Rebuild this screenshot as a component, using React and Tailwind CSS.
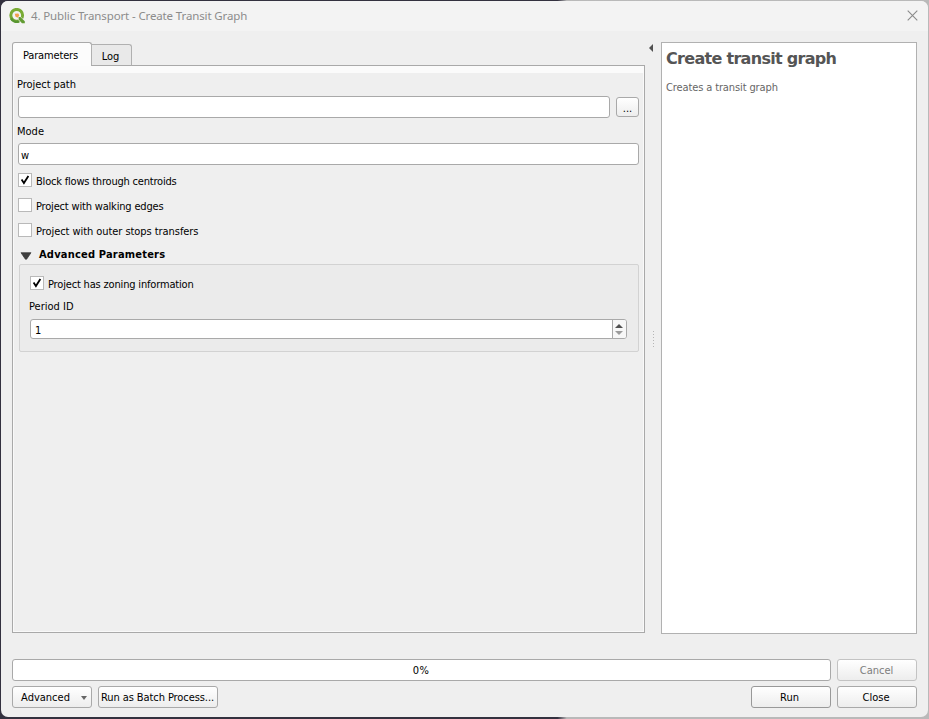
import React from "react";

const BUTTON =
  "flex h-[22px] items-center justify-center rounded-[3px] border bg-linear-to-b from-white to-[#ededed] pt-px whitespace-pre";

function Check({ checked, label, tracking }) {
  return (
    <label className="flex h-[15px] items-start">
      <span className="-mt-px flex size-[14px] shrink-0 items-center justify-center border border-[#b9b9b9] bg-white">
        {checked && (
          <svg width="10" height="10" viewBox="0 0 10 10" fill="none">
            <path d="M1.6 4.6 L3.9 8 L8.4 1" stroke="#000" strokeWidth="1.8" />
          </svg>
        )}
      </span>
      <span className={"ml-1 whitespace-nowrap pt-px " + tracking}>{label}</span>
    </label>
  );
}

function Logo() {
  return (
    <svg width="16" height="16" viewBox="0 0 16 16">
      <circle cx="7.7" cy="7.3" r="5.9" fill="none" stroke="#79ab35" strokeWidth="3" />
      <path d="M2 10.4 A6.4 6.4 0 0 0 10 13.4" fill="none" stroke="#589632" strokeWidth="2.4" />
      <path d="M9.4 9.2 L11 8 L16 12.9 V16 H12.6 L9 11.4Z" fill="#f3f3f3" />
      <path d="M9.6 9 L11.4 9 L15.8 13.2 V15.3 H13 L9.6 11.6Z" fill="#629c33" />
      <path d="M5.8 5.8 L9.3 5.4 L10.3 7.6 L8.6 9.8 L6.4 8.6Z" fill="#f2a04c" />
    </svg>
  );
}

export default function App() {
  return (
    <div className="h-[719px] w-[929px] overflow-hidden bg-[#45434f] bg-linear-to-r from-[#33313f] from-60% to-[#b9b9b9] to-61% pt-px pr-px pb-[2px] pl-px font-['DejaVu_Sans_Condensed','DejaVu_Sans',sans-serif] text-[11px] leading-[14px] text-black">
      <div className="flex h-[716px] flex-col overflow-hidden rounded-[7px] bg-[#efefef]">
        <header className="flex h-[30px] shrink-0 items-center bg-[#f3f3f3] pl-2">
          <Logo />
          <span className="ml-[6px] whitespace-nowrap font-['Noto_Sans',sans-serif] text-[11.5px] tracking-[-0.13px] text-[#8c8c8c]">
            4. Public Transport - Create Transit Graph
          </span>
          <svg className="mr-[10px] mb-[2px] ml-auto" width="11" height="11" viewBox="0 0 11 11">
            <path d="M0.7 0.7 L10.3 10.3 M10.3 0.7 L0.7 10.3" stroke="#8a8a8a" strokeWidth="1.1" />
          </svg>
        </header>

        <main className="flex h-[603px] shrink-0 pt-[11px] pr-[11px] pl-[11px]">
          <section className="flex h-[592px] w-[633px] shrink-0 flex-col">
            <nav className="relative z-10 -mb-px flex h-[24px] items-end">
              <div className="flex h-[24px] w-[80px] items-center justify-center rounded-t-[3px] border border-b-0 border-[#a9a9a9] bg-[#fcfcfc] pt-[2px] pr-[3px] tracking-[-0.15px]">
                Parameters
              </div>
              <div className="-ml-px flex h-[22px] w-[41px] items-center justify-center rounded-tr-[3px] border border-[#b0b0b0] border-b-[#a9a9a9] bg-[#e9e9e9] pt-[4px] pr-[2px]">
                Log
              </div>
            </nav>
            <div className="flex h-[568px] flex-col border border-[#a9a9a9] bg-[#efefef]">
              <div className="h-[7px] shrink-0 bg-[#fbfbfb]" />
              <div className="flex grow flex-col border-x border-b border-[#f9f9f9] px-[4px]">
                <div className="mt-[5px] -ml-px h-[14px] tracking-[-0.05px]">Project path</div>
                <div className="mt-[4px] flex h-[22px] gap-[6px]">
                  <div className="h-[22px] w-[592px] rounded-[3px] border border-[#a9a9a9] bg-white" />
                  <div className="mt-px flex h-[20px] w-[23px] items-end justify-center rounded-[3px] border border-[#a9a9a9] bg-linear-to-b from-white to-[#ededed]">
                    ...
                  </div>
                </div>
                <div className="mt-[7px] -ml-px h-[14px]">Mode</div>
                <div className="mt-[4px] flex h-[22px] items-center rounded-[3px] border border-[#a9a9a9] bg-white pt-[3px] pl-[2px]">
                  w
                </div>
                <div className="mt-[9px] flex flex-col gap-[10px]">
                  <Check checked label="Block flows through centroids" tracking="tracking-[-0.2px]" />
                  <Check label="Project with walking edges" tracking="tracking-[-0.18px]" />
                  <Check label="Project with outer stops transfers" tracking="tracking-[-0.06px]" />
                </div>
                <div className="mt-[8px] flex h-[15px] items-center font-bold tracking-[0.2px]">
                  <svg className="mt-[2px] ml-[2px]" width="12" height="8" viewBox="0 0 12 8">
                    <path d="M1 0.7 H11 L6.6 7.2 H5.4Z" fill="#404040" stroke="#333" strokeWidth="0.7" />
                  </svg>
                  <span className="ml-[7px] whitespace-nowrap">Advanced Parameters</span>
                </div>
                <div className="mt-[2px] ml-px flex h-[88px] shrink-0 flex-col rounded-[2px] border border-[#d2d2d2] bg-[#ebebeb] px-[10px] pt-[12px]">
                  <Check checked label="Project has zoning information" tracking="tracking-[-0.17px]" />
                  <div className="mt-[8px] -ml-px h-[14px]">Period ID</div>
                  <div className="mt-[5px] flex h-[20px] w-[597px] shrink-0 overflow-hidden rounded-[3px] border border-[#a9a9a9] bg-white">
                    <span className="grow pt-[4px] pl-[4px]">1</span>
                    <span className="flex w-[14px] flex-col items-center justify-center gap-[3px] border-l border-[#a9a9a9] bg-[#f7f7f7] pr-px">
                      <svg width="8" height="4" viewBox="0 0 8 4">
                        <path d="M0 4 L4 0 L8 4Z" fill="#505050" />
                      </svg>
                      <svg width="8" height="4" viewBox="0 0 8 4">
                        <path d="M0 0 L4 4 L8 0Z" fill="#9b9b9b" />
                      </svg>
                    </span>
                  </div>
                </div>
              </div>
            </div>
          </section>

          <div className="flex w-[16px] shrink-0 flex-col">
            <svg className="mt-[2px] ml-[3px]" width="6" height="8" viewBox="0 0 6 8">
              <path d="M5 0 V8 L1 4Z" fill="#505050" />
            </svg>
            <div className="mt-[279px] ml-[8px] flex flex-col gap-[2px]">
              <i className="size-px bg-[#b5b5b5]" />
              <i className="size-px bg-[#b5b5b5]" />
              <i className="size-px bg-[#b5b5b5]" />
              <i className="size-px bg-[#b5b5b5]" />
              <i className="size-px bg-[#b5b5b5]" />
              <i className="size-px bg-[#b5b5b5]" />
            </div>
          </div>

          <aside className="h-[592px] w-[256px] shrink-0 border border-[#b1b1b1] bg-white pt-[6px] pl-[4px] text-[#555]">
            <h1 className="h-[20px] whitespace-nowrap font-['DejaVu_Sans',sans-serif] text-[16px] leading-[20px] font-bold tracking-[-0.7px]">
              Create transit graph
            </h1>
            <p className="mt-[12px] whitespace-nowrap tracking-[-0.12px] text-[#666]">Creates a transit graph</p>
          </aside>
        </main>

        <footer className="mt-[25px] flex flex-col gap-[5px] px-[11px]">
          <div className="flex gap-[6px]">
            <div className="flex h-[22px] w-[819px] items-center justify-center rounded-[3px] border border-[#a9a9a9] bg-white pt-[2px] pr-px tracking-[0.4px]">
              0%
            </div>
            <button className={BUTTON + " w-[80px] border-[#c3c3c3] pr-px text-[#7d7d7d]"}>Cancel</button>
          </div>
          <div className="flex gap-[6px]">
            <button className={BUTTON + " w-[80px] border-[#a9a9a9]"}>
              <span className="ml-[4px]">Advanced</span>
              <svg className="ml-[11px]" width="6" height="4" viewBox="0 0 6 4">
                <path d="M0 0 H6 L3 4Z" fill="#666" />
              </svg>
            </button>
            <button className={BUTTON + " w-[120px] border-[#a9a9a9] pr-px tracking-[-0.08px]"}>Run as Batch Process...</button>
            <button className={BUTTON + " ml-auto w-[80px] border-[#999] pr-[3px]"}>Run</button>
            <button className={BUTTON + " w-[80px] border-[#a9a9a9] pr-[2px]"}>Close</button>
          </div>
        </footer>
      </div>
    </div>
  );
}
